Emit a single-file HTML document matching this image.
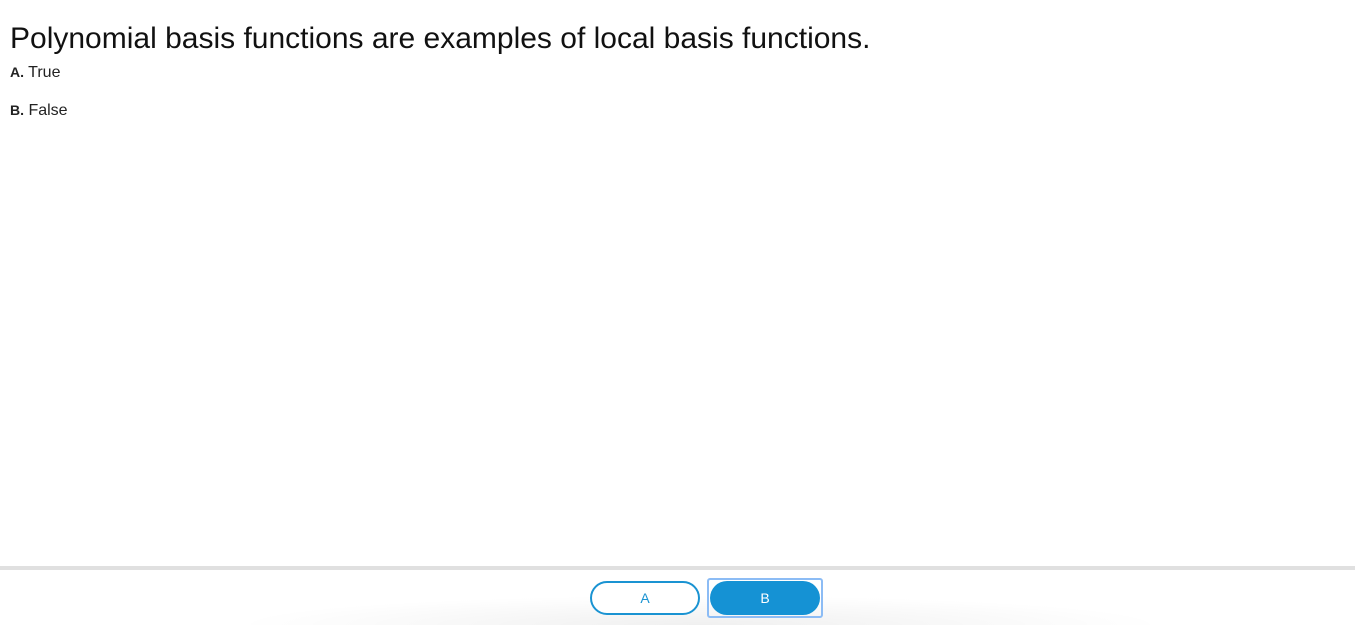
<!DOCTYPE html>
<html><head><style>
body{margin:0;width:1355px;height:625px;background:#fff;font-family:"Liberation Sans",Arial,sans-serif;position:relative;overflow:hidden;color:#222}
h1{position:absolute;left:10px;top:22px;margin:0;font-size:30px;font-weight:normal;color:#111;white-space:nowrap}
.opt{position:absolute;left:10px;font-size:16px;color:#222}
.opt b{font-size:14px}
.bar{position:absolute;left:0;top:566px;width:1355px;height:4px;background:#e0e0e0}
.shadow{position:absolute;left:230px;top:595px;width:940px;height:30px;background:radial-gradient(ellipse at center bottom,rgba(0,0,0,0.06),rgba(0,0,0,0) 70%)}
.btn{position:absolute;top:581px;width:110px;height:34px;box-sizing:border-box;border-radius:17px;font-size:14px;text-align:center;line-height:34px}
.a{left:590px;border:2px solid #1a93d2;color:#1a93d2;background:#fff;line-height:30px}
.b{left:710px;background:#1592d4;color:#fff}
.focus{position:absolute;left:707px;top:578px;width:116px;height:40px;box-sizing:border-box;border:2px solid #8cbcf5;border-radius:3px}
</style></head><body>
<h1>Polynomial basis functions are examples of local basis functions.</h1>
<div class="opt" style="top:64px"><b>A.</b> True</div>
<div class="opt" style="top:102px"><b>B.</b> False</div>
<div class="bar"></div>
<div class="shadow"></div>
<div class="btn a">A</div>
<div class="focus"></div>
<div class="btn b">B</div>
</body></html>
